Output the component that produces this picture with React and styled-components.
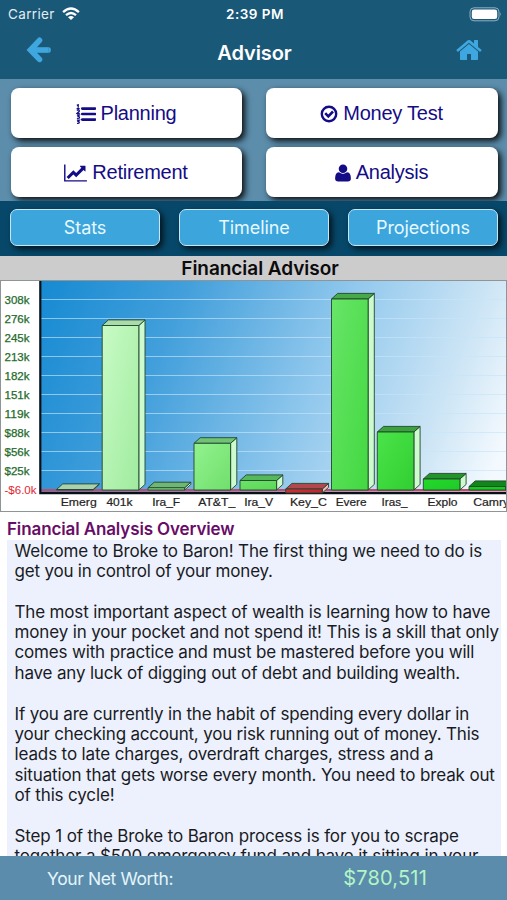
import React from 'react';
import styled, { createGlobalStyle } from 'styled-components';

const GlobalStyle = createGlobalStyle`
  * {
    box-sizing: border-box;
  }

  body {
    margin: 0;
    background: #fff;
  }
`;

const Screen = styled.div`
  width: 507px;
  height: 900px;
  display: flex;
  flex-direction: column;
  overflow: hidden;
  background: #fff;
  font-family: Inter, 'Liberation Sans', sans-serif;
`;

const Header = styled.header`
  flex: none;
  height: 79px;
  background: #1a5878;
  color: #fff;
`;

const StatusBar = styled.div`
  height: 27px;
  padding: 1px 5px 0 8px;
  display: grid;
  grid-template-columns: 1fr auto 1fr;
  align-items: center;
  font-size: 13.5px;
`;

const Carrier = styled.div`
  display: flex;
  align-items: center;
  gap: 7px;
  color: #e3edf2;
  letter-spacing: 0.35px;
`;

const Clock = styled.div`
  font-size: 13.5px;
  font-weight: 600;
  letter-spacing: 0.5px;
`;

const Battery = styled.div`
  display: flex;
  justify-content: flex-end;
`;

const NavBar = styled.div`
  height: 52px;
  padding: 0 24px 0 26px;
  display: grid;
  grid-template-columns: 1fr auto 1fr;
  align-items: center;

  svg {
    display: block;
    margin-bottom: 6px;
  }

  svg:last-child {
    justify-self: end;
  }
`;

const NavTitle = styled.h1`
  margin: 0;
  font-size: 20px;
  font-weight: 600;
  letter-spacing: -0.1px;
`;

const ActionGrid = styled.div`
  flex: none;
  height: 122px;
  padding: 9px 9px 0 11px;
  display: grid;
  grid-template-columns: 231px 232px;
  grid-auto-rows: 50px;
  column-gap: 24px;
  row-gap: 9px;
  background: #5c8dab;
`;

const ActionButton = styled.button`
  display: flex;
  align-items: center;
  justify-content: center;
  gap: 5px;
  padding: 1px 1px 0 0;
  border: 0;
  border-radius: 8px;
  background: #fff;
  box-shadow: 3px 3px 6px rgba(0, 0, 0, 0.9);
  color: #140c86;
  font-family: 'Liberation Sans', Arial, sans-serif;
  font-size: 20px;
  letter-spacing: -0.25px;
`;

const TabBar = styled.div`
  flex: none;
  height: 55px;
  padding: 8px 9px 0 10px;
  display: flex;
  justify-content: space-between;
  background: #07486a;
`;

const Tab = styled.button`
  width: 150px;
  height: 37px;
  padding: 0 0 1px;
  border: 1.5px solid #c8e7f6;
  border-radius: 7px;
  background: #3ba5dc;
  box-shadow: 3px 3px 6px rgba(0, 0, 0, 0.75);
  color: #e8f8ff;
  font-family: inherit;
  font-size: 18px;
  letter-spacing: -0.1px;
`;

const ChartTitle = styled.h2`
  flex: none;
  height: 24px;
  margin: 0;
  padding-left: 13px;
  background: #cdcccd;
  color: #0b0b0b;
  font-size: 19px;
  font-weight: 600;
  line-height: 25px;
  letter-spacing: -0.05px;
  text-align: center;
`;

const ChartSvg = styled.svg`
  flex: none;
  display: block;
  font-family: 'Liberation Sans', Arial, sans-serif;
  font-size: 11px;
`;

const Overview = styled.section`
  flex: 1;
  min-height: 0;
  padding: 7px 6px 0 7px;
  display: flex;
  flex-direction: column;
  overflow: hidden;
`;

const OverviewTitle = styled.h3`
  flex: none;
  height: 21px;
  margin: 0;
  color: #680c68;
  font-size: 17px;
  font-weight: 600;
  line-height: 21px;
  letter-spacing: -0.12px;
`;

const OverviewText = styled.div`
  flex: 1;
  min-height: 0;
  overflow: hidden;
  padding: 0.5px 0 0 7.5px;
  background: #edf1fd;
  color: #191b24;
`;

const Line = styled.div`
  height: 20.4px;
  font-size: 17px;
  line-height: 20.4px;
  letter-spacing: ${(props) => props.$tracking}px;
  white-space: nowrap;
`;

const Footer = styled.footer`
  flex: none;
  height: 44px;
  padding: 0 80px 0 47px;
  display: flex;
  align-items: center;
  justify-content: space-between;
  background: #5b8cab;
`;

const FooterLabel = styled.span`
  color: #e4f5fc;
  font-size: 17.5px;
  letter-spacing: -0.38px;
`;

const FooterValue = styled.span`
  color: #b2f5c6;
  font-size: 20px;
  letter-spacing: 0.2px;
`;

const WifiIcon = () => (
  <svg width="18" height="14" viewBox="0 0 18 14" fill="none" stroke="#fff" strokeWidth="2.3">
    <path d="M1.1 5.2Q9 -2.2 16.9 5.2" />
    <path d="M4 8.2Q9 3.7 14 8.2" />
    <path d="M6 10.2Q9 7.9 12 10.2L9 13.1Z" fill="#fff" stroke="none" />
  </svg>
);

const BatteryIcon = () => (
  <svg width="33" height="15" viewBox="0 0 33 15">
    <rect x="1" y="0.8" width="29" height="13" rx="4" fill="none" stroke="#8fb0c1" />
    <rect x="2.8" y="2.6" width="25.4" height="9.4" rx="2.3" fill="#fff" />
    <path d="M31.2 5.2Q33 7.3 31.2 9.3Z" fill="#8fb0c1" />
  </svg>
);

const BackIcon = () => (
  <svg width="26" height="28" viewBox="0 0 26 28" fill="none" stroke="#3fa7df" strokeWidth="5.6">
    <path d="M13.5 4.3L4.4 14L13.5 23.4" strokeLinecap="round" />
    <path d="M5 14H22.8" />
    <path d="M8 11L6 14L8 17Z" strokeWidth="2" />
    <path d="M22.8 11.2Q24.800 11.200 24.800 14Q24.800 16.800 22.800 16.800Z" fill="#3fa7df" stroke="none" />
  </svg>
);

const HomeIcon = () => (
  <svg width="28" height="28" viewBox="0 0 1792 1792" fill="#3fa7df">
    <path d="M1472 992v480q0 26-19 45t-45 19h-384v-384h-256v384h-384q-26 0-45-19t-19-45v-480q0-1 .5-3t.5-3l575-474 575 474q1 2 1 6zm223-69l-62 74q-8 9-21 11h-3q-13 0-21-7l-692-577-692 577q-12 8-24 7-13-2-21-11l-62-74q-8-10-7-23.5t11-21.5l719-599q32-26 76-26t76 26l244 204v-195q0-14 9-23t23-9h192q14 0 23 9t9 23v408l219 182q10 8 11 21.5t-7 23.5z" />
  </svg>
);

const PlanIcon = () => (
  <svg width="20" height="20" viewBox="0 0 20 20" fill="none" stroke="#140c86">
    <path d="M6.3 4.6H19M6.3 10H19M6.3 15.6H19" strokeWidth="2.7" strokeLinecap="round" />
    <path
      d="M0.8 1.4L2.2 0.8V3.7M0.6 4.6H3.7M0.8 6.3Q3.5 5.3 3.3 7.2L1 9.4H3.8M0.9 11H3.3L2.2 12.4Q4 12.7 3.2 14.2L0.9 14.4M0.9 16.2H3.3L2.1 17.3Q4 17.9 2.9 19.2L1 19.4"
      strokeWidth="1.3"
    />
  </svg>
);

const CheckIcon = () => (
  <svg width="18" height="18" viewBox="0 0 18 18" fill="none" stroke="#140c86">
    <circle cx="9" cy="9" r="7.2" strokeWidth="2.4" />
    <path d="M5.2 8.2L8.3 11.3L13 6.5" strokeWidth="2.6" />
  </svg>
);

const LineChartIcon = () => (
  <svg width="23" height="20" viewBox="0 0 2048 1792" fill="#140c86">
    <path d="M2048 1536v128h-2048v-1536h128v1408h1920zm-128-1248v435q0 21-19.5 29.5t-35.5-7.5l-121-121-633 633q-10 10-23 10t-23-10l-233-233-416 416-192-192 585-585q10-10 23-10t23 10l233 233 464-464-121-121q-16-16-7.5-35.5t29.5-19.5h435q14 0 23 9t9 23z" />
  </svg>
);

const UserIcon = () => (
  <svg width="16" height="20" viewBox="192 0 1408 1792" fill="#140c86">
    <path d="M1600 1405q0 120-73 189.500t-194 69.500h-874q-121 0-194-69.500t-73-189.500q0-53 3.500-103.500t14-109 26.500-108.500 43-97.500 62-81 85.500-53.500 111.500-20q9 0 42 21.500t74.500 48 108 48 133.500 21.500 133.500-21.500 108-48 74.500-48 42-21.500q61 0 111.500 20t85.500 53.500 62 81 43 97.500 26.500 108.500 14 109 3.500 103.500zm-320-893q0 159-112.500 271.500t-271.500 112.500-271.500-112.500-112.500-271.500 112.500-271.500 271.500-112.500 271.500 112.500 112.500 271.500z" />
  </svg>
);

// Chart coordinates start at the top edge of the chart.
const BASE = 210;
const ticks = ['308k', '276k', '245k', '213k', '182k', '151k', '119k', '$88k', '$56k', '$25k'];

const bars = [
  { name: 'Emerg', x: 56.5, top: 209.5, width: 36, front: ['#a9d8a7', '#a9d8a7'], cap: '#a9d1ad' },
  { name: '401k', x: 102.2, top: 45.5, width: 26, front: ['#c8fbc5', '#a0eb9f'], cap: '#a9dcaa' },
  { name: 'Ira_F', x: 148, top: 207.8, width: 28, front: ['#85d681', '#85d681'], cap: '#6fb872' },
  { name: 'AT&T_', x: 194, top: 163.3, width: 37, front: ['#92f28e', '#70df6c'], cap: '#70c376' },
  { name: 'Ira_V', x: 240, top: 200.5, width: 29, front: ['#6be367', '#5cd658'], cap: '#55b85a' },
  { name: 'Key_C', x: 285.7, top: 209, width: 37, front: ['#d43339', '#bd222b'], cap: '#b4464d', bottom: 213 },
  { name: 'Evere', x: 331.5, top: 19, width: 31, front: ['#68e568', '#43d841'], cap: '#47a94a' },
  { name: 'Iras_', x: 377.3, top: 152, width: 26, front: ['#4be34a', '#31cf31'], cap: '#39a23c' },
  { name: 'Explo', x: 423.3, top: 199, width: 30, front: ['#22d92a', '#20ca28'], cap: '#25932b' },
  { name: 'Camry', x: 469, top: 206.5, width: 36, front: ['#11cc1a', '#11cc1a'], cap: '#12851b' },
];

const Bar = ({ bar, index }) => {
  const { x, top, front, cap, bottom = BASE } = bar;
  const right = x + 36.6;
  return (
    <g stroke="#23452c" strokeWidth="0.9" strokeLinejoin="round">
      <linearGradient id={`bar-${index}`} x1="0" y1="0" x2="1" y2="1">
        <stop offset="0" stopColor={front[0]} />
        <stop offset="1" stopColor={front[1]} />
      </linearGradient>
      <path
        d={`M${right} ${top}l6.2 -5.6V${bottom - 5.6}L${right} ${bottom}Z`}
        fill={bottom > BASE ? '#f6b8bb' : '#cdfbcd'}
      />
      <path d={`M${x} ${top}l6.2 -5.6H${right + 6.2}L${right} ${top}Z`} fill={cap} />
      <rect x={x} y={top} width="36.6" height={bottom - top} fill={`url(#bar-${index})`} />
    </g>
  );
};

const Chart = () => (
  <ChartSvg width="507" height="232" viewBox="0 0 507 232">
    <defs>
      <linearGradient id="sky" gradientUnits="userSpaceOnUse" x1="40" y1="0" x2="496" y2="182">
        <stop offset="0" stopColor="#168ad2" />
        <stop offset="0.28" stopColor="#429fdb" />
        <stop offset="0.6" stopColor="#91c8ed" />
        <stop offset="0.85" stopColor="#cbe4f5" />
        <stop offset="1" stopColor="#f3f9fe" />
      </linearGradient>
    </defs>
    <rect width="507" height="232" fill="#fff" />
    <rect x="41" y="1" width="466" height="212" fill="url(#sky)" />
    {ticks.map((tick, i) => (
      <g key={tick}>
        <path d={`M41 ${19.5 + i * 19}H507`} stroke="#c4e5fa" strokeOpacity="0.65" />
        <text
          x="4.5"
          y={24 + i * 19}
          textLength="25"
          lengthAdjust="spacingAndGlyphs"
          fill="#256b2b"
          stroke="#256b2b"
          strokeWidth="0.25"
        >
          {tick}
        </text>
      </g>
    ))}
    <text x="4.5" y="214" textLength="32" lengthAdjust="spacingAndGlyphs" fill="#e3242f">
      -$6.0k
    </text>
    <path d="M41 210.2H507" stroke="#b6506f" strokeWidth="2.4" />
    <path d="M40.3 1V213.2H507" fill="none" stroke="#071018" strokeWidth="2.2" />
    {bars.map((bar, i) => (
      <g key={bar.name}>
        <Bar bar={bar} index={i} />
        <text
          x={bar.x + 4.2}
          y="226"
          textLength={bar.width}
          lengthAdjust="spacingAndGlyphs"
          fill="#242424"
          stroke="#242424"
          strokeWidth="0.2"
        >
          {bar.name}
        </text>
      </g>
    ))}
    <path d="M0 0.5H507M0.5 0V232M0 231.5H507M506.5 0V232" fill="none" stroke="#8f9496" />
  </ChartSvg>
);

const lines = [
  ['Welcome to Broke to Baron! The first thing we need to do is', -0.16],
  ['get you in control of your money.', -0.2],
  ['', 0],
  ['The most important aspect of wealth is learning how to have', -0.16],
  ['money in your pocket and not spend it! This is a skill that only', -0.14],
  ['comes with practice and must be mastered before you will', -0.16],
  ['have any luck of digging out of debt and building wealth.', -0.17],
  ['', 0],
  ['If you are currently in the habit of spending every dollar in', -0.16],
  ['your checking account, you risk running out of money. This', -0.2],
  ['leads to late charges, overdraft charges, stress and a', -0.13],
  ['situation that gets worse every month. You need to break out', -0.14],
  ['of this cycle!', -0.15],
  ['', 0],
  ['Step 1 of the Broke to Baron process is for you to scrape', -0.13],
  ['together a $500 emergency fund and have it sitting in your', -0.13],
];

const App = () => {
  return (
    <>
      <GlobalStyle />
      <Screen>
        <Header>
          <StatusBar>
            <Carrier>
              Carrier
              <WifiIcon />
            </Carrier>
            <Clock>2:39 PM</Clock>
            <Battery>
              <BatteryIcon />
            </Battery>
          </StatusBar>
          <NavBar>
            <BackIcon />
            <NavTitle>Advisor</NavTitle>
            <HomeIcon />
          </NavBar>
        </Header>
        <ActionGrid>
          <ActionButton>
            <PlanIcon />
            Planning
          </ActionButton>
          <ActionButton>
            <CheckIcon />
            Money Test
          </ActionButton>
          <ActionButton>
            <LineChartIcon />
            Retirement
          </ActionButton>
          <ActionButton>
            <UserIcon />
            Analysis
          </ActionButton>
        </ActionGrid>
        <TabBar>
          <Tab>Stats</Tab>
          <Tab>Timeline</Tab>
          <Tab>Projections</Tab>
        </TabBar>
        <ChartTitle>Financial Advisor</ChartTitle>
        <Chart />
        <Overview>
          <OverviewTitle>Financial Analysis Overview</OverviewTitle>
          <OverviewText>
            {lines.map(([text, tracking], i) => (
              <Line key={i} $tracking={tracking}>
                {text}
              </Line>
            ))}
          </OverviewText>
        </Overview>
        <Footer>
          <FooterLabel>Your Net Worth:</FooterLabel>
          <FooterValue>$780,511</FooterValue>
        </Footer>
      </Screen>
    </>
  );
};

export default App;
